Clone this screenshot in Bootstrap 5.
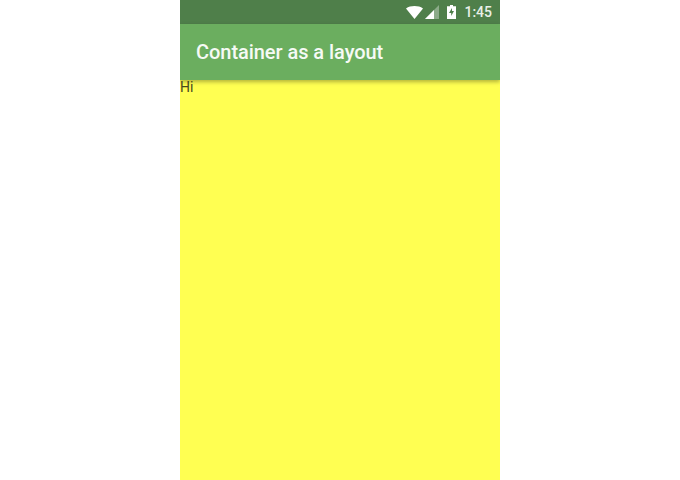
<!DOCTYPE html>
<html lang="en">
<head>
<meta charset="utf-8">
<title>Container as a layout</title>
<link href="https://cdn.jsdelivr.net/npm/bootstrap@5.3.0/dist/css/bootstrap.min.css" rel="stylesheet">
<style>
html, body { height: 100%; background: #fff; overflow: hidden; }
.phone { width: 320px; height: 480px; background: #ffff52; overflow: hidden; }
.status-strip { height: 24px; background: #4f7f4a; color: #e9f0e8; font: 500 14px/24px Roboto, sans-serif; padding-right: 8px; }
.app-strip { height: 56px; background: #6bae5f; color: #f6faf5; padding-left: 16px; font: 500 20px/1 Roboto, sans-serif; letter-spacing: -.05px; box-shadow: 0 2px 4px rgba(0,0,0,.3); position: relative; }
.body-text { font: 400 14px/15px Roboto, sans-serif; color: #4a4a20; }
.ico-wifi { margin-right: 2px; }
.ico-signal { margin-right: 8px; }
.ico-batt { margin-right: 8px; }
</style>
</head>
<body>
<div class="phone mx-auto d-flex flex-column">
  <div class="status-strip d-flex align-items-center justify-content-end">
    <svg class="ico-wifi" width="17" height="13" viewBox="0 0 17 13"><path d="M0 2.400C2.400.8 5.300 0 8.500 0s6.100.8 8.500 2.400L8.500 13z" fill="#fff"/></svg>
    <svg class="ico-signal" width="14" height="14" viewBox="0 0 14 14"><path d="M14 0v14H0z" fill="#fff" opacity=".35"/><path d="M9 5v9H0z" fill="#fff"/></svg>
    <svg class="ico-batt" width="9" height="14" viewBox="0 0 9 14"><path d="M3 0h3v1.200h3V14H0V1.200h3z" fill="#fff"/><path d="M5 3 2 8h2.200v3L7 6H5z" fill="#4f7f4a"/></svg>
    <span>1:45</span>
  </div>
  <div class="app-strip d-flex align-items-center">Container as a layout</div>
  <div class="body-text">Hi</div>
</div>
</body>
</html>
